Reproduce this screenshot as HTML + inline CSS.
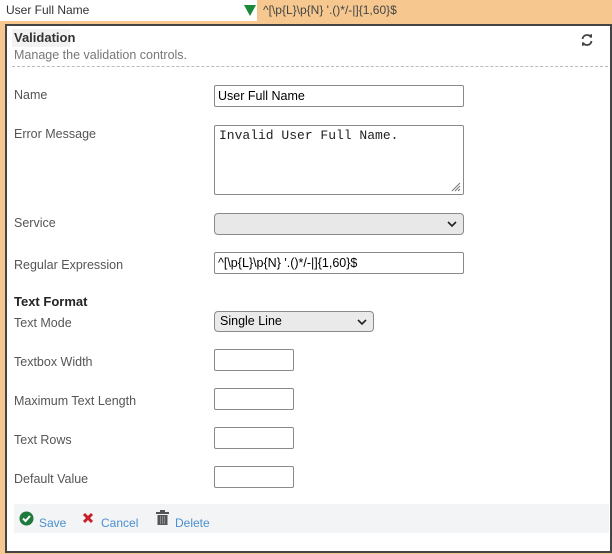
<!DOCTYPE html>
<html><head><style>
*{box-sizing:border-box;margin:0;padding:0}
body{width:612px;height:554px;background:#f6c890;font-family:"Liberation Sans",sans-serif;position:relative;overflow:hidden}
.a{position:absolute}
.lbl{position:absolute;left:14px;font-size:12.5px;color:#555}
.inp{position:absolute;border:1px solid #8a8a8a;border-radius:2px;background:#fff}
.t{font-size:12.5px;color:#000}
</style></head><body>
<div class="a" style="left:0;top:0;width:257px;height:21px;background:#fff"></div>
<div class="a t" style="left:6px;top:3px;font-size:12px;color:#333">User Full Name</div>
<svg class="a" style="left:244px;top:5px" width="12" height="11"><polygon points="0,0 12,0 6,11" fill="#1a8a3a"/></svg>
<div class="a" style="left:263px;top:3px;font-size:12px;color:#444">^[\p{L}\p{N} '.()*/-|]{1,60}$</div>

<div class="a" style="left:5px;top:24px;width:607px;height:529px;background:#fff;border:2px solid #444"></div>
<div class="a" style="left:12px;top:29px;width:58px;height:18px;background:#f2f2f2"></div>
<div class="a" style="left:14px;top:30px;font-size:13px;font-weight:bold;color:#333">Validation</div>
<div class="a" style="left:14px;top:48px;font-size:12.5px;color:#777">Manage the validation controls.</div>
<div class="a" style="left:12px;top:66px;width:596px;border-top:1px dashed #bbb"></div>
<svg class="a" style="left:580px;top:33px" width="14" height="14" viewBox="0 0 14 14"><path d="M2.5 6A4.5 4.5 0 0 1 11 4.5M11.5 8A4.5 4.5 0 0 1 3 9.5" stroke="#444" stroke-width="1.8" fill="none"/><path d="M9 2L12 5L12 1Z M5 12L2 9L2 13Z" fill="#444"/></svg>

<div class="lbl" style="top:88px">Name</div>
<div class="inp" style="left:214px;top:85px;width:250px;height:22px"></div>
<div class="a t" style="left:218px;top:89px">User Full Name</div>

<div class="lbl" style="top:127px">Error Message</div>
<div class="inp" style="left:214px;top:125px;width:250px;height:70px"></div>
<div class="a" style="left:219px;top:128px;font-family:'Liberation Mono',monospace;font-size:13px;color:#222">Invalid User Full Name.</div>
<svg class="a" style="left:449px;top:180px" width="12" height="12"><path d="M11 3L3 11M11 6L6 11M11 9L9 11" stroke="#777" stroke-width="1"/></svg>

<div class="lbl" style="top:216px">Service</div>
<div class="inp" style="left:214px;top:213px;width:250px;height:22px;background:#e8e8e8;border-radius:4px"></div>
<svg class="a" style="left:447px;top:220px" width="10" height="8"><path d="M1 2L5 6L9 2" stroke="#222" stroke-width="1.6" fill="none"/></svg>

<div class="lbl" style="top:258px">Regular Expression</div>
<div class="inp" style="left:214px;top:252px;width:250px;height:22px"></div>
<div class="a t" style="left:218px;top:256px">^[\p{L}\p{N} '.()*/-|]{1,60}$</div>

<div class="a" style="left:14px;top:294px;font-size:13px;font-weight:bold;color:#222">Text Format</div>
<div class="lbl" style="top:316px">Text Mode</div>
<div class="inp" style="left:214px;top:311px;width:160px;height:21px;background:#eaeaea;border-radius:4px"></div>
<div class="a t" style="left:220px;top:314px">Single Line</div>
<svg class="a" style="left:357px;top:318px" width="10" height="8"><path d="M1 2L5 6L9 2" stroke="#222" stroke-width="1.6" fill="none"/></svg>

<div class="lbl" style="top:355px">Textbox Width</div>
<div class="inp" style="left:214px;top:349px;width:80px;height:22px"></div>
<div class="lbl" style="top:394px">Maximum Text Length</div>
<div class="inp" style="left:214px;top:388px;width:80px;height:22px"></div>
<div class="lbl" style="top:433px">Text Rows</div>
<div class="inp" style="left:214px;top:427px;width:80px;height:22px"></div>
<div class="lbl" style="top:472px">Default Value</div>
<div class="inp" style="left:214px;top:466px;width:80px;height:22px"></div>

<div class="a" style="left:14px;top:504px;width:595px;height:29px;background:#f3f4f6"></div>
<svg class="a" style="left:19px;top:511px" width="15" height="15"><circle cx="7.5" cy="7.5" r="7" fill="#1e7a3c"/><path d="M4 7.5L6.5 10L11 5" stroke="#fff" stroke-width="2" fill="none"/></svg>
<div class="a" style="left:39px;top:516px;font-size:12px;color:#4a8fd0">Save</div>
<svg class="a" style="left:82px;top:512px" width="12" height="12"><path d="M2 2L10 10M10 2L2 10" stroke="#c81e2a" stroke-width="3"/></svg>
<div class="a" style="left:101px;top:516px;font-size:12px;color:#4a8fd0">Cancel</div>
<svg class="a" style="left:156px;top:510px" width="13" height="15"><rect x="0" y="2" width="13" height="2" fill="#555"/><rect x="4" y="0" width="5" height="2" fill="#555"/><rect x="1.5" y="5" width="10" height="10" fill="#555"/><path d="M4.5 6v8M6.5 6v8M8.5 6v8" stroke="#999" stroke-width="0.8"/></svg>
<div class="a" style="left:175px;top:516px;font-size:12px;color:#4a8fd0">Delete</div>
</body></html>
